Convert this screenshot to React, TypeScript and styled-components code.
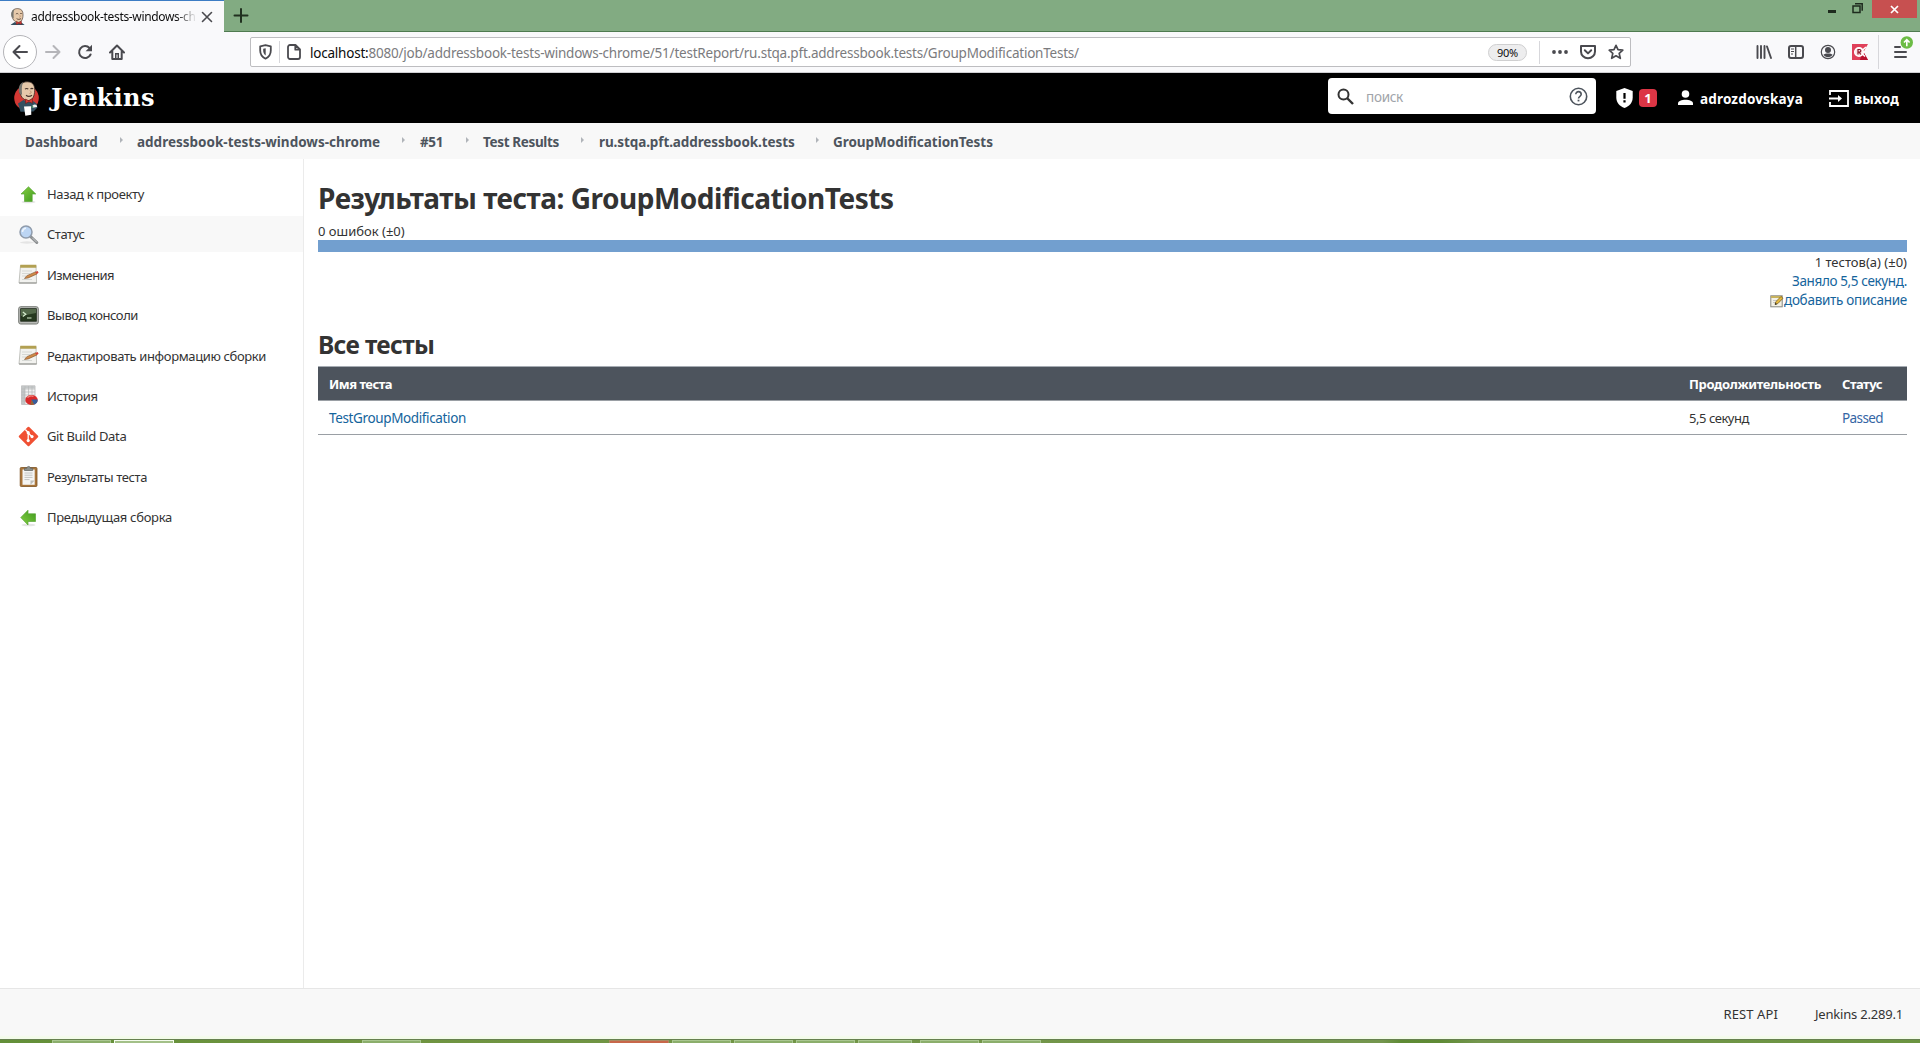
import React from "react";
import styled, { createGlobalStyle, css } from "styled-components";

const Global = createGlobalStyle`
  * { box-sizing: border-box; }
  body { margin: 0; background: #fff; overflow: hidden; }
  svg { display: block; flex: none; }
`;

const Screen = styled.div`
  display: flex;
  flex-direction: column;
  width: 1920px;
  height: 1043px;
  font-family: "Noto Sans", "Open Sans", sans-serif;
  font-size: 13px;
  line-height: 18px;
  color: #333;
  white-space: nowrap;
`;

const Text = styled.span<{ $ls?: number }>`
  letter-spacing: ${(p) => p.$ls ?? 0}px;
`;

/* ---------- browser chrome ---------- */

const TabStrip = styled.div`
  display: flex;
  height: 32px;
  background: #82ab82;
  border-bottom: 1px solid #4f7a50;
`;

const Tab = styled.div`
  display: flex;
  align-items: center;
  width: 224px;
  height: 32px;
  padding: 0 11px 0 9px;
  background: #f9f9fb;
  border-top: 1px solid #3c7cc4;
`;

const TabTitle = styled.div`
  flex: 1;
  margin: 0 6px;
  overflow: hidden;
  font-size: 12px;
  color: #0c0c0d;
  letter-spacing: -0.34px;
  mask-image: linear-gradient(to right, #000 145px, transparent 166px);
`;

const NewTab = styled.div`
  display: flex;
  padding: 8px 0 0 9px;
`;

const WindowButtons = styled.div`
  display: flex;
  align-items: flex-start;
  margin-left: auto;
  padding-right: 3px;
`;

const Minimize = styled.span`
  width: 8px;
  height: 3px;
  margin: 10px 16px 0 0;
  background: #1e2b1e;
`;

const CloseWindow = styled.div`
  display: flex;
  align-items: center;
  justify-content: center;
  width: 45px;
  height: 18px;
  margin-left: 9px;
  background: #c75050;
`;

const Toolbar = styled.div`
  display: flex;
  align-items: center;
  height: 41px;
  padding-left: 3px;
  background: #f9f9fb;
  border-bottom: 1px solid #cfcfd3;
`;

const BackButton = styled.div`
  display: flex;
  align-items: center;
  justify-content: center;
  width: 34px;
  height: 34px;
  margin-right: 8px;
  border: 1px solid #b4b4b8;
  border-radius: 50%;
  background: #fff;
`;

const NavIcons = styled.div`
  display: flex;
  align-items: center;
  gap: 16px;
`;

const UrlBar = styled.div`
  display: flex;
  align-items: center;
  width: 1381px;
  height: 30px;
  margin-left: 125px;
  padding: 0 6px 0 8px;
  border: 1px solid #bdbdc0;
  border-radius: 2px;
  background: #fff;
`;

const Divider = styled.span<{ $h: number; $m: string }>`
  width: 1px;
  height: ${(p) => p.$h}px;
  margin: ${(p) => p.$m};
  background: #d7d7db;
`;

const Url = styled.div`
  flex: 1;
  margin: 2px 0 0 9px;
  font-size: 13.5px;
  color: #7b7b7e;
  letter-spacing: -0.22px;
`;

const UrlHost = styled.span`
  color: #0c0c0d;
`;

const Zoom = styled.span`
  width: 39px;
  height: 17px;
  margin-right: 12px;
  border: 1px solid #cfcfd0;
  border-radius: 9px;
  background: #ededee;
  color: #0c0c0d;
  font-size: 11px;
  line-height: 16px;
  text-align: center;
  letter-spacing: -0.2px;
`;

const UrlActions = styled.div`
  display: flex;
  align-items: center;
  gap: 12px;
`;

const Extensions = styled.div`
  display: flex;
  align-items: center;
  gap: 16px;
  margin-left: auto;
  padding-right: 5px;
`;

/* ---------- Jenkins header ---------- */

const Header = styled.header`
  display: flex;
  align-items: center;
  height: 50px;
  padding-left: 13px;
  background: #000;
  color: #fff;
  font-weight: 700;
  font-size: 13.5px;
`;

const Brand = styled.span`
  margin: 0 auto 1px 11px;
  font-family: "DejaVu Serif", serif;
  font-size: 24px;
  line-height: 30px;
  letter-spacing: 0.45px;
`;

const Search = styled.div`
  display: flex;
  align-items: center;
  width: 268px;
  height: 36px;
  margin: 0 20px 4px 0;
  padding: 0 8px 0 9px;
  border-radius: 4px;
  background: #fff;
`;

const Placeholder = styled.span`
  flex: 1;
  margin: 2px 0 0 12px;
  font-weight: 400;
  color: #a0a4a9;
  letter-spacing: -0.28px;
`;

const Badge = styled.span`
  width: 18px;
  height: 18px;
  margin: 0 21px 0 6px;
  border-radius: 4px;
  background: #dc3545;
  text-align: center;
  font-size: 13px;
`;

const HeaderLink = styled.span<{ $gap: number; $w: number }>`
  display: flex;
  align-items: center;
  gap: ${(p) => p.$gap}px;
  width: ${(p) => p.$w}px;
  ${Text} { padding-top: 2px; }
`;

const Breadcrumbs = styled.nav`
  display: flex;
  align-items: center;
  height: 36px;
  padding: 1px 0 0 25px;
  background: #f8f8f8;
  color: #4d545d;
  font-weight: 700;
  font-size: 13.5px;
`;

const Crumb = styled.span<{ $w: number; $ls: number }>`
  width: ${(p) => p.$w}px;
  letter-spacing: ${(p) => p.$ls}px;
`;

const CrumbArrow = styled.i<{ $r: number }>`
  margin: 0 ${(p) => p.$r}px 3px 0;
  border: solid transparent;
  border-width: 3px 0 3px 3px;
  border-left-color: #b0b4b9;
`;

/* ---------- body ---------- */

const Body = styled.div`
  display: flex;
  flex: 1;
  min-height: 0;
`;

const Sidebar = styled.aside`
  width: 304px;
  padding-top: 17px;
  border-right: 1px solid #ebebeb;
`;

const Task = styled.div<{ $active?: boolean }>`
  display: flex;
  align-items: center;
  gap: 8px;
  height: 36px;
  margin-bottom: 4.4px;
  padding-left: 18px;
  ${(p) => p.$active && css`background: #f8f8f8;`}
`;

const Main = styled.main`
  flex: 1;
  padding: 19px 13px 0 14px;
`;

const H1 = styled.h1`
  margin: 0;
  font-size: 28px;
  line-height: 40px;
  letter-spacing: -0.48px;
`;

const H2 = styled.h2`
  margin: 17px 0 3px;
  font-size: 24.5px;
  line-height: 36px;
  letter-spacing: -0.65px;
`;

const Failures = styled.div`
  margin-top: 4px;
  line-height: 18px;
`;

const Bar = styled.div`
  height: 12px;
  background: #729fcf;
`;

const Summary = styled.div`
  display: flex;
  flex-direction: column;
  align-items: flex-end;
  padding-top: 1px;
  line-height: 19px;
`;

const Link = styled.a<{ $ls: number; $color?: string }>`
  display: flex;
  align-items: center;
  color: ${(p) => p.$color ?? "#15649c"};
  font-size: 13.5px;
  letter-spacing: ${(p) => p.$ls}px;
`;

const Table = styled.div`
  border-top: 1px solid #a6acb3;
`;

const Row = styled.div<{ $head?: boolean }>`
  display: grid;
  grid-template-columns: 1fr 153px 65px;
  align-items: center;
  height: 34px;
  padding-left: 11px;
  border-bottom: 1px solid #9a9fa4;
  ${(p) => p.$head && css`
    background: #4d545d;
    color: #fff;
    font-weight: 700;
  `}
`;

const Footer = styled.footer`
  display: flex;
  justify-content: flex-end;
  gap: 37px;
  height: 51px;
  padding: 16px 17px 0 0;
  border-top: 1px solid #e6e6e6;
  background: linear-gradient(#f8f8f8 46px, #f3fbea 48px);
`;

const Taskbar = styled.div`
  display: flex;
  height: 4px;
  padding-left: 52px;
  border-top: 1px solid #66804f;
  background: linear-gradient(to right, #638f38 0, #6f9440 20%, #74964e 72%, #5e8a34 73%, #5f8b35 75%, #74964e 77%, #6b9440 100%);
`;

const TaskButton = styled.span<{ $w: number; $ml: number; $tone?: string; $edge?: string }>`
  width: ${(p) => p.$w}px;
  margin-left: ${(p) => p.$ml}px;
  border: 1px solid ${(p) => p.$edge ?? "#a9c690"};
  border-bottom: 0;
  background: ${(p) => p.$tone ?? "#8bae6b"};
`;

/* ---------- icons ---------- */

const stroke = { fill: "none", stroke: "#4a4a4f", strokeWidth: 2, strokeLinecap: "round", strokeLinejoin: "round" } as const;

const Butler = ({ w, h, full }: { w: number; h: number; full?: boolean }) => (
  <svg width={w} height={h} viewBox={full ? "0 0 26 35" : "3 0 20 23"}>
    {full && <ellipse cx="13" cy="17" rx="12.3" ry="12.5" fill="#d33833" />}
    <path d="M4.500 22.500 10 19l4 2 4-2 5 3.500 1 4-4 4-13 .3z" fill="#335061" />
    <path d="M6 9C6 3 9.500.7 14 .8c5 .1 7.300 3.200 7.200 8.400-.1 6-2.200 10-6.400 10.400C10 19.500 6.300 15 6 9z" fill="#e6c9aa" stroke="#3a2c26" strokeWidth=".8" />
    <path d="M6 12.500C4.300 7 6 2.500 9.800 1.300 7.800 5 8.300 9 8.600 14z" fill="#77766f" />
    <path d="M11.500 8.200c1-1 2.500-.9 3.300 0M17 8c.9-.9 2-.9 2.700 0M12.500 14.300c2 1.600 4 1.300 6 0" fill="none" stroke="#49372e" strokeWidth="1.100" />
    <path d="M16.500 9.500c1.500 1.500 1.500 3-.5 3" fill="none" stroke="#b98868" strokeWidth=".9" />
    <path d="m12 18 3.300 1.700L19 17.500v4.800l-3.600-1.500L12 22.500z" fill="#d33833" stroke="#6b1512" strokeWidth=".5" />
    {full && <path d="m10.500 25.500 7-.3.300 8.500-6 1z" fill="#fff" />}
    {full && <path d="M19 24.500c2-2 5-1 4.500 1.500l-4.500.8z" fill="#f4f4f2" />}
    {full && <path d="m17.800 25 1.800-.4.200 2.200-2 .2z" fill="#4d8f6b" />}
  </svg>
);

const GreenArrow = ({ left }: { left?: boolean }) => (
  <svg width="21" height="21" viewBox="0 0 21 21">
    <defs>
      <linearGradient id="green" x1="0" y1="0" x2="1" y2="1">
        <stop offset="0" stopColor="#86d043" /><stop offset="1" stopColor="#3f9a1e" />
      </linearGradient>
    </defs>
    <ellipse cx="10.500" cy="18" rx="7" ry="1.300" fill="#000" opacity=".1" />
    <path d="M10.500 2.800 17.800 10h-3.600v7.500H6.500V10H3z" fill="url(#green)" stroke="#5aa637" strokeWidth=".7" transform={left ? "rotate(-90 10.500 10.500)" : undefined} />
  </svg>
);

const Magnifier = () => (
  <svg width="21" height="21" viewBox="0 0 21 21">
    <ellipse cx="9" cy="18.500" rx="7" ry="1.200" fill="#000" opacity=".08" />
    <path d="m12.500 12.500 6.300 6" stroke="#8b8e90" strokeWidth="3" strokeLinecap="round" />
    <path d="m14.500 14 4 4" stroke="#c9cbcc" strokeWidth="1" strokeLinecap="round" />
    <circle cx="8" cy="8" r="6" fill="#bcd5f3" stroke="#8f9bab" strokeWidth="1.500" />
    <path d="M4.500 8A3.600 3.600 0 0 1 8 4.300" fill="none" stroke="#eef5fd" strokeWidth="1.600" />
  </svg>
);

const Notepad = () => (
  <svg width="21" height="21" viewBox="0 0 21 21">
    <path d="M2.500 1.500h15.500l.6 17.500H1z" fill="#f2f2ef" stroke="#b3b4af" strokeWidth=".8" />
    <path d="M1.200 19h17.400" stroke="#8d8e8a" />
    <path d="M2.300.8h16v3H2.200z" fill="#b2a052" />
    <path d="M4 7h10M4 9.500h8M4 12h4M4 15.500h10" stroke="#d3d5d0" strokeWidth=".9" />
    <path d="m6.500 14.500 2.300-2.800 9-4 1.300 2.200-8.800 4z" fill="#cf8a48" stroke="#7c5430" strokeWidth=".6" />
    <path d="m17.300 7.900 2.400-.9.900 1.800-2.100 1.200z" fill="#d4453c" />
  </svg>
);

const Terminal = () => (
  <svg width="21" height="21" viewBox="0 0 21 21">
    <rect x=".7" y="1.700" width="19.600" height="17.300" rx="2" fill="#b9bbb7" stroke="#777a75" />
    <rect x="2.700" y="3.700" width="15.600" height="12.500" fill="#26391f" stroke="#1a2617" strokeWidth=".8" />
    <path d="M3 4h15v4L3 11z" fill="#53694a" />
    <path d="m4.800 7 3 2.200-3 2.200M9 13h4.500" fill="none" stroke="#d7edcf" strokeWidth="1.200" />
  </svg>
);

const History = () => (
  <svg width="21" height="21" viewBox="0 0 21 21">
    <path d="M3.500.8H17v18.700H3.500z" fill="#f2f2f2" stroke="#c4c4c4" />
    <path d="M3.500 1H7v18H3.500zM3.500 1H17v2.500H3.500z" fill="#c3c6c7" />
    <path d="M3.500 4H17M3.500 7H17M3.500 10H17M3.500 13H17M3.500 16H17M7 1v18M10.500 1v18M14 1v18" stroke="#b4b8b8" strokeWidth=".7" />
    <ellipse cx="13.500" cy="15" rx="6.200" ry="5" fill="#d92b2b" />
    <path d="M13.500 14.500h6.200c.2 2.500-1.200 4.300-3.700 5z" fill="#355f9e" />
    <path d="m13.500 14.800 2.500 4.800-3.500.3z" fill="#8a6a3c" />
    <path d="M9.500 12.700c1.500-1.800 4-2 6-1.300" stroke="#f08a80" fill="none" strokeWidth="1.200" />
  </svg>
);

const Git = () => (
  <svg width="21" height="21" viewBox="0 0 21 21">
    <rect x="3.300" y="3.300" width="14.400" height="14.400" rx="1" transform="rotate(45 10.500 10.500)" fill="#f05033" />
    <path d="m7.300 3.500 2.900 3v8M10.200 7l3.800 3.700" stroke="#fff" strokeWidth="1.300" fill="none" />
    <g fill="#fff"><circle cx="10.200" cy="6.700" r="1.600" /><circle cx="10.200" cy="14.600" r="1.600" /><circle cx="14" cy="10.600" r="1.600" /></g>
  </svg>
);

const Clipboard = () => (
  <svg width="21" height="23" viewBox="0 0 21 23">
    <rect x="2.200" y="2.500" width="16.800" height="19" rx="1" fill="#a9753a" stroke="#7d5322" strokeWidth=".8" />
    <path d="M4.500 4.500h12.200v15.300H4.500z" fill="#f5f5f3" />
    <path d="M6.500 8h8M6.500 10.200h8M6.500 12.400h8M6.500 14.600h5" stroke="#c3c4c2" />
    <path d="m12.500 19.800 4.200-4.300h-4.200z" fill="#bdbdb9" />
    <path d="M6.500 5.500V3.300h2.200C9 .8 12.200.8 12.500 3.300h2.200v2.200z" fill="#8c908b" stroke="#5f625e" strokeWidth=".7" />
  </svg>
);

const SmallEdit = () => (
  <svg width="14" height="15" viewBox="0 -1 14 15">
    <rect x=".8" y="1.800" width="11.400" height="11" fill="#f3f1e6" stroke="#85867f" />
    <path d="M1 2h11v2H1z" fill="#c7b25d" />
    <path d="M3 6.500h4M3 8.500h3" stroke="#bbb" strokeWidth=".8" />
    <path d="m5 10.500.8-2.800L11 2.500l2 1.800-5.200 5.300z" fill="#e5b93e" stroke="#6d5518" strokeWidth=".7" />
    <path d="m5 10.800.6-2 1.400 1.400z" fill="#222" />
  </svg>
);

const tasks: { label: string; ls: number; icon: React.ReactNode; active?: boolean }[] = [
  { label: "Назад к проекту", ls: -0.35, icon: <GreenArrow /> },
  { label: "Статус", ls: -0.45, icon: <Magnifier />, active: true },
  { label: "Изменения", ls: -0.55, icon: <Notepad /> },
  { label: "Вывод консоли", ls: -0.43, icon: <Terminal /> },
  { label: "Редактировать информацию сборки", ls: -0.37, icon: <Notepad /> },
  { label: "История", ls: -0.4, icon: <History /> },
  { label: "Git Build Data", ls: -0.35, icon: <Git /> },
  { label: "Результаты теста", ls: -0.39, icon: <Clipboard /> },
  { label: "Предыдущая сборка", ls: -0.31, icon: <GreenArrow left /> },
];

const crumbs = [
  { label: "Dashboard", w: 95, ls: 0, r: 14 },
  { label: "addressbook-tests-windows-chrome", w: 265, ls: 0, r: 15 },
  { label: "#51", w: 46, ls: -0.4, r: 14 },
  { label: "Test Results", w: 98, ls: -0.35, r: 15 },
  { label: "ru.stqa.pft.addressbook.tests", w: 217, ls: -0.1, r: 14 },
  { label: "GroupModificationTests", w: 160, ls: -0.04, r: 0 },
];

export default function App() {
  return (
    <Screen>
      <Global />
      <TabStrip>
        <Tab>
          <Butler w={16} h={17} />
          <TabTitle>addressbook-tests-windows-ch</TabTitle>
          <svg width="12" height="12" viewBox="0 0 12 12"><path d="m1.500 1.500 9 9m0-9-9 9" {...stroke} strokeWidth={1.600} /></svg>
        </Tab>
        <NewTab>
          <svg width="16" height="16" viewBox="0 0 16 16"><path d="M8 1v13M1.500 7.500h13" {...stroke} stroke="#20301f" /></svg>
        </NewTab>
        <WindowButtons>
          <Minimize />
          <svg width="11" height="14" viewBox="0 0 11 14"><path d="M1 6h7v6.500H1zM3 3.700h7.200v7" fill="none" stroke="#1e2b1e" strokeWidth="1.500" /></svg>
          <CloseWindow>
            <svg width="9" height="9" viewBox="0 0 9 9"><path d="m1 1 7 7m0-7L1 8" stroke="#fff" strokeWidth="1.700" /></svg>
          </CloseWindow>
        </WindowButtons>
      </TabStrip>

      <Toolbar>
        <BackButton>
          <svg width="16" height="16" viewBox="0 0 16 16"><path d="M15 8H1.500M7.500 2l-6 6 6 6" {...stroke} /></svg>
        </BackButton>
        <NavIcons>
          <svg width="16" height="16" viewBox="0 0 16 16"><path d="M1 8h13.500M8.500 2l6 6-6 6" {...stroke} stroke="#b5b5b9" /></svg>
          <svg width="16" height="16" viewBox="0 0 16 16">
            <path d="M13.600 10.500A6 6 0 1 1 12.500 4" {...stroke} /><path d="M15 .8v6.400H8.600z" fill="#4a4a4f" />
          </svg>
          <svg width="16" height="16" viewBox="0 0 16 16">
            <path d="M1 8.500 8 1.500l7 7M3.300 7.500V15h9.400V7.500" {...stroke} />
            <path d="M6 14.500V9h4v5.500z" fill="#4a4a4f" /><path d="M8 10.500v3.500" stroke="#f9f9fb" />
          </svg>
        </NavIcons>
        <UrlBar>
          <svg width="13" height="16" viewBox="0 0 13 16">
            <path d="M6.500 1.200 1.200 2.300v4.200c0 4 2.200 6.700 5.300 8.200 3.100-1.500 5.300-4.200 5.300-8.200V2.300z" {...stroke} strokeWidth={1.800} />
            <path d="M6.700 4.200v7.300C5 10.200 4.200 8.500 4.200 6.500V4.700z" fill="#4a4a4f" />
          </svg>
          <Divider $h={22} $m="0 7px 0 7px" />
          <svg width="14" height="16" viewBox="0 0 14 16"><path d="M3 1h5.500L13 5.500V13a2 2 0 0 1-2 2H3a2 2 0 0 1-2-2V3a2 2 0 0 1 2-2zM8.300 1.200v4.500h4.500" {...stroke} strokeWidth={1.800} /></svg>
          <Url><UrlHost>localhost:</UrlHost>8080/job/addressbook-tests-windows-chrome/51/testReport/ru.stqa.pft.addressbook.tests/GroupModificationTests/</Url>
          <Zoom>90%</Zoom>
          <Divider $h={23} $m="0 12px 0 0" />
          <UrlActions>
            <svg width="16" height="16" viewBox="0 0 16 16"><g fill="#4a4a4f"><circle cx="2" cy="8" r="1.900" /><circle cx="8" cy="8" r="1.900" /><circle cx="14" cy="8" r="1.900" /></g></svg>
            <svg width="16" height="16" viewBox="0 0 16 16"><path d="M1 2h14v5.500a7 6.800 0 0 1-14 0zM4.800 6.300 8 9.400l3.200-3.100" {...stroke} /></svg>
            <svg width="16" height="16" viewBox="0 0 16 16"><path d="m8 1.300 2 4.400 4.800.5-3.600 3.200 1.100 4.900L8 11.800l-4.300 2.500 1.100-4.900L1.200 6.200 6 5.700z" {...stroke} strokeWidth={1.700} /></svg>
          </UrlActions>
        </UrlBar>
        <Extensions>
          <svg width="16" height="16" viewBox="0 0 16 16"><path d="M1.500 2v12M5 2v12M8.500 2v12M11 2.500l4 11.500" {...stroke} strokeWidth={1.900} /></svg>
          <svg width="16" height="16" viewBox="0 0 16 16"><rect x="1" y="2" width="14" height="12" rx="2" {...stroke} /><path d="M7.700 2v12" {...stroke} strokeWidth={1.500} /><path d="M3 5h3M3 7.500h3M3 10h2" stroke="#4a4a4f" /></svg>
          <svg width="16" height="16" viewBox="0 0 16 16"><circle cx="8" cy="8" r="6.700" fill="none" stroke="#4a4a4f" strokeWidth="1.200" /><circle cx="8" cy="6" r="3" fill="#4a4a4f" /><path d="M3.500 10.500C5 9 11 9 12.500 10.500c-1.500 3.500-7.500 3.500-9 0z" fill="#4a4a4f" /></svg>
          <svg width="16" height="16" viewBox="0 0 16 16">
            <path d="M0 0h16l-4.500 8 4.500 8H0z" fill="#e0405a" /><path d="m9 12 3-3 4 7H8z" fill="#b8102e" />
            <circle cx="7" cy="8" r="4.300" fill="#fbe3e6" stroke="#fff" strokeWidth="1.500" /><path d="m10 6.500 4-3.500M10 9.500l3 3" stroke="#fff" strokeWidth="1.500" />
            <path d="M6 10.500v-5h1.500a1.300 1.300 0 0 1 0 2.700H6M7.300 8.200l1.400 2.300" fill="none" stroke="#8c1526" strokeWidth="1.200" />
          </svg>
          <Divider $h={34} $m="0 -4px 0 -6px" />
          <svg width="24" height="34" viewBox="0 0 24 34">
            <path d="M4 12h5M4 17h11M4 22h11" {...stroke} />
            <circle cx="15.800" cy="7.500" r="6.200" fill="#6cbc45" />
            <path d="M15.800 11.200V5M13 7.500l2.800-2.800 2.800 2.800" fill="none" stroke="#fff" strokeWidth="1.600" />
          </svg>
        </Extensions>
      </Toolbar>

      <Header>
        <Butler w={27} h={35} full />
        <Brand>Jenkins</Brand>
        <Search>
          <svg width="17" height="17" viewBox="0 0 17 17"><circle cx="6.500" cy="6.500" r="5" fill="none" stroke="#333" strokeWidth="2" /><path d="m10 10 6 6" stroke="#333" strokeWidth="2.400" /></svg>
          <Placeholder>поиск</Placeholder>
          <svg width="19" height="19" viewBox="0 0 19 19">
            <circle cx="9.500" cy="9.500" r="8.200" fill="none" stroke="#4d545d" strokeWidth="1.600" />
            <path d="M6.800 7.300c0-3.600 5.400-3.500 5.400 0 0 2-2.700 2-2.700 4.300" fill="none" stroke="#4d545d" strokeWidth="1.600" /><path d="M8.600 12.700h1.800v1.700H8.600z" fill="#4d545d" />
          </svg>
        </Search>
        <svg width="17" height="20" viewBox="0 0 17 20"><path d="M8.500 0 .3 3v6.500c0 5 3.200 8.800 8.200 10.500 5-1.700 8.200-5.500 8.200-10.500V3z" fill="#fff" /><path d="M8.500 5v5.700M8.500 12.300v2.100" stroke="#000" strokeWidth="2.200" /></svg>
        <Badge>1</Badge>
        <HeaderLink $gap={7} $w={151}>
          <svg width="15" height="16" viewBox="0 0 15 16"><circle cx="7.500" cy="4" r="3.800" fill="#fff" /><path d="M0 15v-1.700C0 8.500 15 8.500 15 13.300V15z" fill="#fff" /></svg>
          <Text $ls={0.17}>adrozdovskaya</Text>
        </HeaderLink>
        <HeaderLink $gap={5} $w={91}>
          <svg width="20" height="17" viewBox="0 0 20 17"><path d="M1 5V1h18v15H1v-4M0 8.500h10" fill="none" stroke="#fff" strokeWidth="1.800" /><path d="M9 5l4 3.500L9 12z" fill="#fff" /></svg>
          <Text $ls={0.2}>выход</Text>
        </HeaderLink>
      </Header>

      <Breadcrumbs>
        {crumbs.map((c, i) => (
          <React.Fragment key={c.label}>
            <Crumb $w={c.w} $ls={c.ls}>{c.label}</Crumb>
            {i < crumbs.length - 1 && <CrumbArrow $r={c.r} />}
          </React.Fragment>
        ))}
      </Breadcrumbs>

      <Body>
        <Sidebar>
          {tasks.map((t) => (
            <Task key={t.label} $active={t.active}>
              {t.icon}
              <Text $ls={t.ls}>{t.label}</Text>
            </Task>
          ))}
        </Sidebar>
        <Main>
          <H1>Результаты теста: GroupModificationTests</H1>
          <Failures>0 ошибок (±0)</Failures>
          <Bar />
          <Summary>
            <span>1 тестов(а) (±0)</span>
            <Link $ls={-0.38}>Заняло 5,5 секунд.</Link>
            <Link $ls={-0.28}><SmallEdit />добавить описание</Link>
          </Summary>
          <H2>Все тесты</H2>
          <Table>
            <Row $head>
              <Text $ls={-0.5}>Имя теста</Text>
              <Text $ls={-0.35}>Продолжительность</Text>
              <Text $ls={-0.5}>Статус</Text>
            </Row>
            <Row>
              <Link $ls={-0.37}>TestGroupModification</Link>
              <Text $ls={-0.46}>5,5 секунд</Text>
              <Link $ls={-0.6} $color="#3465a4">Passed</Link>
            </Row>
          </Table>
        </Main>
      </Body>

      <Footer>
        <Text $ls={0.1}>REST API</Text>
        <Text $ls={-0.2}>Jenkins 2.289.1</Text>
      </Footer>
      <Taskbar>
        <TaskButton $w={59} $ml={0} />
        <TaskButton $w={60} $ml={3} $edge="#f4fbee" $tone="#a3c088" />
        <TaskButton $w={59} $ml={188} />
        <TaskButton $w={60} $ml={188} $edge="#a88a62" $tone="#c8674a" />
        {[59, 59, 59, 54, 59, 59].map((w, i) => (
          <TaskButton key={i} $w={w} $ml={i === 4 ? 8 : 3} />
        ))}
      </Taskbar>
    </Screen>
  );
}
